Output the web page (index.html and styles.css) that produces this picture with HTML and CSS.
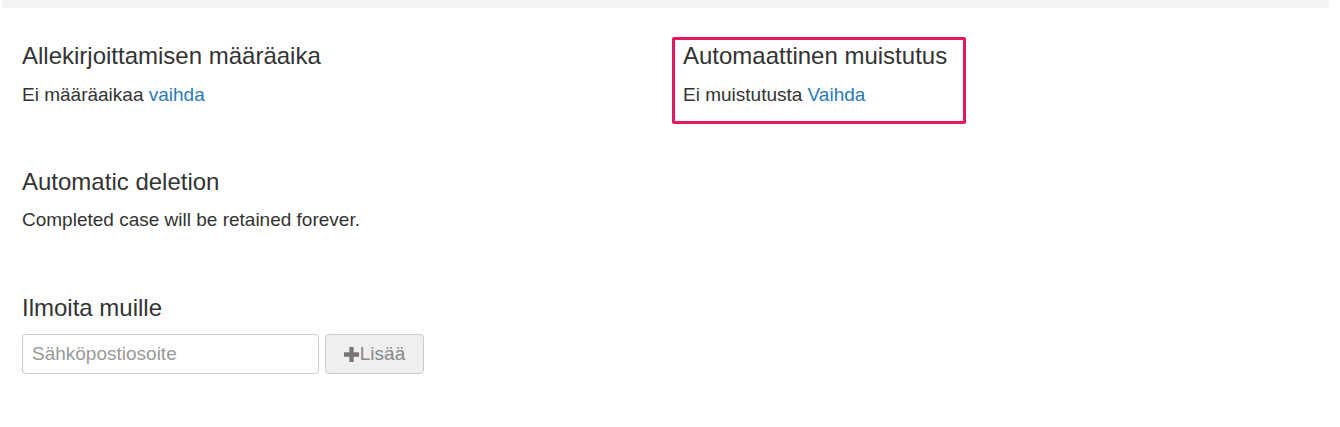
FILE: index.html
```html
<!DOCTYPE html>
<html lang="fi">
<head>
<meta charset="utf-8">
<title>Asetukset</title>
<link rel="stylesheet" href="styles.css">
</head>
<body>
<div class="topbar"></div>
<div class="page">
  <div class="row">
    <section class="block">
      <h4 class="title">Allekirjoittamisen määräaika</h4>
      <p class="text">Ei määräaikaa <a href="#" class="link">vaihda</a></p>
    </section>
    <section class="block side">
      <div class="highlight">
        <h4 class="title">Automaattinen muistutus</h4>
        <p class="text">Ei muistutusta <a href="#" class="link">Vaihda</a></p>
      </div>
    </section>
  </div>
  <section class="block second">
    <h4 class="title">Automatic deletion</h4>
    <p class="text">Completed case will be retained forever.</p>
  </section>
  <section class="block third">
    <h4 class="title">Ilmoita muille</h4>
    <div class="form">
      <input class="email" type="text" placeholder="Sähköpostiosoite">
      <button class="add" type="button" disabled><svg class="plus" viewBox="0 0 14 14" width="14" height="14"><path d="M5 0h4v5h5v4H9v5H5V9H0V5h5z" fill="currentColor"/></svg>Lisää</button>
    </div>
  </section>
</div>
</body>
</html>
```
FILE: styles.css
```css
html, body {
  margin: 0;
  padding: 0;
  background: #fff;
}
body {
  font-family: "Liberation Sans", Arial, sans-serif;
  color: #333;
  font-size: 19px;
}
.topbar {
  height: 8px;
  margin: 0 11px 0 2px;
  background: #f4f4f4;
}
.page {
  padding: 0 22px;
}
.row {
  display: grid;
  grid-template-columns: 650px 1fr;
  column-gap: 11px;
  align-items: start;
}
.block {
  padding-top: 35px;
}
.side {
  padding-top: 29px;
  margin-left: -11px;
}
.highlight {
  display: inline-block;
  border: 3px solid #e8175d;
  border-radius: 2px;
  padding: 3px 16px 15px 8px;
}
.title {
  margin: 0;
  font-size: 24px;
  font-weight: normal;
  line-height: 26px;
}
.text {
  margin: 15px 0 0;
  line-height: 22px;
}
.link {
  color: #2a7ab8;
  text-decoration: none;
}
.second {
  padding-top: 45px;
}
.second .text {
  margin-top: 14px;
}
.third {
  padding-top: 64px;
}
.form {
  display: flex;
  gap: 6px;
  margin-top: 13px;
}
.email {
  box-sizing: border-box;
  width: 297px;
  height: 40px;
  border: 1px solid #ccc;
  border-radius: 4px;
  padding: 0 9px;
  font-family: inherit;
  font-size: 19px;
  color: #555;
}
.email::placeholder {
  color: #999;
}
.add {
  box-sizing: border-box;
  height: 40px;
  width: 99px;
  border: 1px solid #ccc;
  border-radius: 4px;
  background: #efefef;
  color: #888;
  font-family: inherit;
  font-size: 19px;
  display: flex;
  align-items: center;
  justify-content: center;
  gap: 1px;
  padding: 0;
}
.plus {
  width: 15px;
  height: 15px;
  color: #777;
}
```
